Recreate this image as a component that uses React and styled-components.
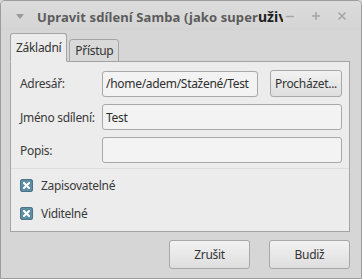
import React from "react";
import styled, { createGlobalStyle } from "styled-components";

const GlobalStyle = createGlobalStyle`
  html, body {
    margin: 0;
    padding: 0;
    background: #d6d6d6;
  }
  body {
    font-family: "Noto Sans", "Open Sans", sans-serif;
    font-size: 12px;
    letter-spacing: -0.3px;
    color: #3a3a3a;
  }
`;

const Window = styled.div`
  box-sizing: border-box;
  width: 362px;
  height: 279px;
  display: flex;
  flex-direction: column;
  background: #d6d6d6;
  border: 1px solid #9c9c9c;
  border-radius: 5px 5px 0 0;
  overflow: hidden;
`;

const TitleBar = styled.div`
  height: 30px;
  flex-shrink: 0;
  display: flex;
  align-items: center;
  padding: 0 0 0 15px;
  background: linear-gradient(#dcdcdc, #d4d4d4);
`;

const MenuArrow = styled.div`
  width: 0;
  height: 0;
  border-left: 4px solid transparent;
  border-right: 4px solid transparent;
  border-top: 5px solid #9a9a9a;
  margin-right: 13px;
  margin-top: 1px;
`;

const Title = styled.div`
  flex: 0 0 246px;
  font-weight: bold;
  font-size: 13px;
  letter-spacing: 0.1px;
  color: #5c5c5c;
  white-space: nowrap;
  overflow: hidden;
`;

const Dark = styled.span`
  color: #1e1e1e;
  font-size: 14px;
`;

const WinButtons = styled.div`
  display: flex;
  align-items: center;
  gap: 16px;
  margin-left: 2px;
`;

const WinButton = styled.div`
  width: 10px;
  height: 10px;
  display: flex;
  align-items: center;
  justify-content: center;
`;

const Body = styled.div`
  flex: 1;
  display: flex;
  flex-direction: column;
  padding: 2px 11px 0 9px;
`;

const TabRow = styled.div`
  display: flex;
  align-items: flex-end;
  height: 29px;
  gap: 2px;
  position: relative;
  z-index: 1;
  margin-bottom: -1px;
`;

const Tab = styled.div`
  box-sizing: border-box;
  padding: 0 5px;
  height: ${(p) => (p.$active ? "29px" : "23px")};
  display: flex;
  align-items: center;
  background: ${(p) => (p.$active ? "#ececec" : "#d9d9d9")};
  border: 1px solid #a4a4a4;
  border-bottom: ${(p) => (p.$active ? "1px solid #ececec" : "1px solid #a4a4a4")};
  border-radius: 3px 3px 0 0;
  color: #333;
`;

const Panel = styled.div`
  box-sizing: border-box;
  height: 171px;
  background: #ececec;
  border: 1px solid #a4a4a4;
  padding: 8px 7px 0 9px;
  display: flex;
  flex-direction: column;
`;

const FormGrid = styled.div`
  display: grid;
  grid-template-columns: 82px 1fr;
  row-gap: 7px;
  align-items: center;
`;

const Label = styled.div`
  color: #3a3a3a;
  white-space: nowrap;
`;

const FieldRow = styled.div`
  display: flex;
  gap: 12px;
  align-items: center;
`;

const Entry = styled.div`
  box-sizing: border-box;
  flex: 1;
  height: 26px;
  display: flex;
  align-items: center;
  padding: 0 3px;
  background: #f3f3f3;
  border: 1px solid #a8a8a8;
  border-radius: 3px;
  color: #2e2e2e;
  white-space: nowrap;
  overflow: hidden;
`;

const Button = styled.div`
  box-sizing: border-box;
  width: ${(p) => p.$width || "72px"};
  height: ${(p) => p.$height || "27px"};
  display: flex;
  align-items: center;
  justify-content: center;
  background: linear-gradient(#f2f2f2, #dedede);
  border: 1px solid #a8a8a8;
  border-radius: 3px;
  color: #333;
  white-space: nowrap;
`;

const Separator = styled.div`
  height: 1px;
  background: #dcdcdc;
  margin: 5px -7px 0 -9px;
`;

const CheckList = styled.div`
  display: flex;
  flex-direction: column;
  gap: 11px;
  padding-top: 8px;
`;

const CheckRow = styled.div`
  display: flex;
  align-items: center;
  gap: 8px;
  height: 17px;
`;

const CheckBox = styled.div`
  box-sizing: border-box;
  width: 13px;
  height: 13px;
  border-radius: 2px;
  background: #5f8ea3;
  border: 1px solid #4a7487;
  display: flex;
  align-items: center;
  justify-content: center;
`;

const ButtonRow = styled.div`
  display: flex;
  justify-content: flex-end;
  gap: 19px;
  padding-top: 8px;
`;

const CheckMark = () => (
  <svg width="7" height="7" viewBox="0 0 7 7">
    <path d="M1 1L6 6M6 1L1 6" stroke="#ffffff" strokeWidth="2" strokeLinecap="square" />
  </svg>
);

const WinIcon = ({ d }) => (
  <WinButton>
    <svg width="10" height="10" viewBox="0 0 10 10">
      <path d={d} stroke="#a6a6a6" strokeWidth="1.6" fill="none" />
    </svg>
  </WinButton>
);

const Check = ({ label }) => (
  <CheckRow>
    <CheckBox>
      <CheckMark />
    </CheckBox>
    <span>{label}</span>
  </CheckRow>
);

const App = () => {
  return (
    <>
      <GlobalStyle />
      <Window>
        <TitleBar>
          <MenuArrow />
          <Title>
            Upravit sdílení Samba (jako super<Dark>uživatel</Dark>)
          </Title>
          <WinButtons>
            <WinIcon d="M1 5.5H9" />
            <WinIcon d="M1 5H9M5 1V9" />
            <WinIcon d="M1.5 1.5L8.5 8.5M8.5 1.5L1.5 8.5" />
          </WinButtons>
        </TitleBar>
        <Body>
          <TabRow>
            <Tab $active>Základní</Tab>
            <Tab>Přístup</Tab>
          </TabRow>
          <Panel>
            <FormGrid>
              <Label>Adresář:</Label>
              <FieldRow>
                <Entry>/home/adem/Stažené/Test</Entry>
                <Button $height="27px">Procházet...</Button>
              </FieldRow>
              <Label>Jméno sdílení:</Label>
              <Entry>Test</Entry>
              <Label>Popis:</Label>
              <Entry />
            </FormGrid>
            <Separator />
            <CheckList>
              <Check label="Zapisovatelné" />
              <Check label="Viditelné" />
            </CheckList>
          </Panel>
          <ButtonRow>
            <Button $width="81px" $height="29px">Zrušit</Button>
            <Button $width="81px" $height="29px">Budiž</Button>
          </ButtonRow>
        </Body>
      </Window>
    </>
  );
};

export default App;
